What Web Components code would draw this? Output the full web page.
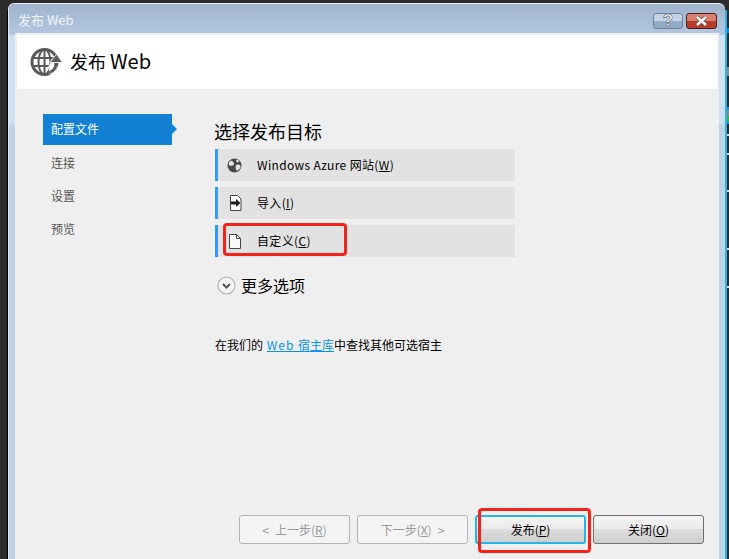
<!DOCTYPE html>
<html lang="zh-CN"><head><meta charset="utf-8"><title>发布 Web</title>
<style>
html,body{margin:0;padding:0;background:#2b2b2b}
body{width:729px;height:559px;overflow:hidden;font-family:"Noto Sans CJK SC","Noto Sans",sans-serif;font-size:12px;color:#000}
</style></head><body>
<publish-desktop>
  <publish-window>
    <title-bar slot="title">发布 Web</title-bar>
    <page-banner slot="banner">发布 <span style="font-size:20px">Web</span></page-banner>
    <wizard-nav slot="nav">
      <nav-item active>配置文件</nav-item>
      <nav-item>连接</nav-item>
      <nav-item>设置</nav-item>
      <nav-item>预览</nav-item>
    </wizard-nav>
    <target-panel slot="main">
      <target-row icon="globe">Windows Azure 网站(<u>W</u>)</target-row>
      <target-row icon="import">导入(<u>I</u>)</target-row>
      <target-row icon="doc" marked>自定义(<u>C</u>)</target-row>
    </target-panel>
    <wizard-footer slot="footer">
      <wizard-button disabled><span style="margin-right:6px">&lt;</span>上一步(<u>R</u>)</wizard-button>
      <wizard-button disabled>下一步(<u>X</u>)<span style="margin-left:6px">&gt;</span></wizard-button>
      <wizard-button primary marked>发布(<u>P</u>)</wizard-button>
      <wizard-button>关闭(<u>O</u>)</wizard-button>
    </wizard-footer>
  </publish-window>
</publish-desktop>
<script>
function def(name, css, html, init){
  customElements.define(name, class extends HTMLElement{
    constructor(){super();const r=this.attachShadow({mode:"open"});
      r.innerHTML="<style>"+css+"</style>"+(typeof html==="function"?html(this):html);}
    connectedCallback(){ if(init) init(this); }
  });
}
def("publish-desktop",`
:host{display:flex;width:729px;height:559px;box-sizing:border-box;padding:3px 0 0 7px;background:#2b2b2b}
.edge{width:1px;background:#000;margin-top:7px}
.cyan{width:2px;background:#25b4e6;margin-top:7px}
.strip{width:2px;margin-top:-3px;position:relative;background:linear-gradient(#2b2b2b 0 28px,#1281d4 28px 33px,#2b2b2b 33px 67px,#8a8a8a 67px 76px,#2b2b2b 76px 107px,#1a8fe0 107px 110px,#8a8a8a 110px 116px,#3fae49 116px 122px,#1a8fe0 122px 124px,#2b2b2b 124px 134px,#ddd 134px 136px,#2b2b2b 136px 153px,#ddd 153px 155px,#2b2b2b 155px 190px,#ddd 190px 192px,#2b2b2b 192px 248px,#ddd 248px 250px,#2b2b2b 250px 286px,#ddd 286px 288px,#2b2b2b 288px)}
`,`<div class="edge"></div><slot></slot><div class="cyan"></div><div class="strip"></div>`);

def("publish-window",`
:host{display:flex;flex-direction:column;flex:1;min-width:0;box-sizing:border-box;border-radius:6px 6px 0 0;padding:0 6px 0 6px;
 background:linear-gradient(#9fb3cd 0,#b3c8e0 30px,#cfe0f2 32px,#cfe0f2 118px,#bfd3e8 122px,#bfd3e8 100%);border-top:1px solid #e8eef5;border-left:1px solid #dfe8f2}
.body{flex:1;display:flex;flex-direction:column;background:#efefef;min-height:0}
.cols{flex:1;display:flex;min-height:0}
`,`<slot name="title"></slot><div class="body"><slot name="banner"></slot>
<div class="cols"><slot name="nav"></slot><slot name="main"></slot></div><slot name="footer"></slot></div>`);

def("title-bar",`
:host{display:flex;align-items:center;height:29px;box-sizing:border-box;padding:0 2px 0 3px;color:#f1f5fa;font-size:13px;font-family:"Noto Sans CJK SC",sans-serif}
.t{flex:1;margin-top:2px}
.b{width:30px;height:16px;box-sizing:border-box;border-radius:3px;display:flex;align-items:center;justify-content:center;margin-top:5px}
.h{border:1px solid #6e8197;background:linear-gradient(#c3d4e6 0 50%,#92abc6 50% 100%);margin-right:3px}
.c{border:1px solid #4b1f1e;background:linear-gradient(#d9806e 0 50%,#b63c28 50% 100%);width:31px}
.q{font:700 17px/14px "Liberation Sans",sans-serif;color:#fff;-webkit-text-stroke:.6px #5a6470}
`,`<div class="t"><slot></slot></div>
<div class="b h"><span class="q">?</span></div>
<div class="b c"><svg width="15" height="10" viewBox="0 0 15 10"><path d="M3 1l9 8M12 1l-9 8" stroke="#555" stroke-width="4"/><path d="M3 1l9 8M12 1l-9 8" stroke="#f4f4f4" stroke-width="2.6"/></svg></div>`);

def("page-banner",`
:host{display:flex;align-items:center;gap:7px;height:54px;margin:2px 2px 0 2px;padding-left:13px;background:#fff;font-size:18px;color:#000}
svg{display:block;margin-top:-1px}
.t{margin-top:-3px}
`,`<svg width="33" height="30" viewBox="0 0 33 30" fill="none" stroke="#5a5a5a">
<circle cx="14.5" cy="15" r="12.5" stroke-width="3"/>
<ellipse cx="14.5" cy="15" rx="6" ry="12.5" stroke-width="2"/>
<path d="M14.5 3v24M3 11h23M3 19h23" stroke-width="2"/>
<path d="M20 28c5-1 7.500-6 7-13l-5-1-4 6z" fill="#fff" stroke="none"/>
<path d="M19.500 25.500c4-1 6.500-5 6.500-10" stroke-width="3"/>
<path d="M26.500 7l6 8.500h-12.500z" fill="#5a5a5a" stroke="#fff" stroke-width=".8"/>
</svg><div class="t"><slot></slot></div>`);

def("wizard-nav",`
:host{display:flex;flex-direction:column;gap:2px;width:200px;box-sizing:border-box;padding:25px 0 0 28px}
`,`<slot></slot>`);

def("nav-item",`
:host{display:flex;align-items:center;height:31px;width:129px;box-sizing:border-box;padding:0 0 0 8px;color:#555;font-size:12px;position:relative}
:host([active]){background:#1281d4;color:#fff;padding-bottom:2px}
:host([active])::after{content:"";position:absolute;left:100%;top:10px;border:5px solid transparent;border-left-color:#1281d4;border-right:0}
`,`<slot></slot>`);

def("target-panel",`
:host{display:flex;flex-direction:column;flex:1;box-sizing:border-box;padding:31px 0 0 0}
h2{margin:0 0 6px -1px;font-weight:400;font-size:18px;line-height:23px;color:#000;height:23px}
.rows{display:flex;flex-direction:column;gap:6px;width:300px}
.more{display:flex;align-items:center;gap:5px;margin:18px 0 0 2px;font-size:16px;height:20px}
.more svg{display:block;margin-top:1px}
.where{margin-top:41px;font-size:12px;line-height:18px;height:18px}
.sp{letter-spacing:1px}
a{color:#0a92f0;text-decoration:underline}
`,`<h2>选择发布目标</h2><div class="rows"><slot></slot></div>
<div class="more"><svg width="19" height="19" viewBox="0 0 19 19"><circle cx="9.500" cy="9.500" r="8.500" fill="#f4f4f4" stroke="#b5b5b5" stroke-width="1.200"/><path d="M6 8l3.500 3.500L13 8" fill="none" stroke="#555" stroke-width="2"/></svg><span>更多选项</span></div>
<div class="where">在我们的<span class="sp"> </span><a href="#"><span class="sp">Web </span>宿主库</a>中查找其他可选宿主</div>`);

const rowIcons={
 globe:`<svg style="margin-left:-2px" width="15" height="15" viewBox="0 0 15 15"><circle cx="7.500" cy="7.500" r="7" fill="#4a4a4a"/><path d="M4 2.500c2 1 3 2 3 3.500S5 8 3 7.500 1.500 4 4 2.500zM9 7c2-1 4-.5 4.500 1S12 12 10.500 12.500 8 9 9 7zM9 2c1.500-.5 3 .5 3.500 1.500L10 4.500z" fill="#e2e2e2"/></svg>`,
 import:`<svg width="13" height="16" viewBox="0 0 13 16"><path d="M1.500 .5h7l3.500 3.500v11.500h-10.500z" fill="#fff" stroke="#444"/><path d="M2 6.500h5v-2.500l4.500 4-4.500 4v-2.500h-5z" fill="#222"/></svg>`,
 doc:`<svg width="12" height="15" viewBox="0 0 12 15"><path d="M.5 .5h7l4 4v10h-11z" fill="#fafafa" stroke="#444"/><path d="M7.500 .5v4h4" fill="none" stroke="#444"/></svg>`
};
def("target-row",`
:host{display:flex;align-items:center;height:32px;box-sizing:border-box;background:#e2e2e2;border-left:3px solid #3399ff;position:relative;font-size:12px;color:#000}
.i{width:39px;padding-left:11px;box-sizing:border-box;display:flex}
.i svg{display:block}
.t{letter-spacing:.35px;margin-top:-2px}
:host([marked])::after{content:"";position:absolute;left:5px;top:-2px;width:124px;height:33px;box-sizing:border-box;border:3px solid #f5211b;border-radius:4px}
`,el=>`<div class="i">${rowIcons[el.getAttribute("icon")]||""}</div><div class="t"><slot></slot></div>`);

def("wizard-footer",`
:host{display:flex;justify-content:flex-end;gap:7px;padding:0 15px 15px 0}
`,`<slot></slot>`);

def("wizard-button",`
:host{display:flex;align-items:center;justify-content:center;width:111px;height:29px;box-sizing:border-box;border:1px solid #707070;border-radius:3px;font-size:12px;color:#000;position:relative;
 background:linear-gradient(#f3f3f3 0,#ebebeb 50%,#dcdcdc 50%,#cfcfcf 100%)}
:host([disabled]){background:#f4f4f4;border-color:#b3b3b3;color:#9a9a9a}
:host([primary]){border:2px solid #27b5e8;border-radius:3px}
:host([marked])::after{content:"";position:absolute;left:1px;top:-9px;width:113px;height:45px;box-sizing:border-box;border:3px solid #f5211b;border-radius:4px}
`,`<slot></slot>`);
</script>
</body></html>
